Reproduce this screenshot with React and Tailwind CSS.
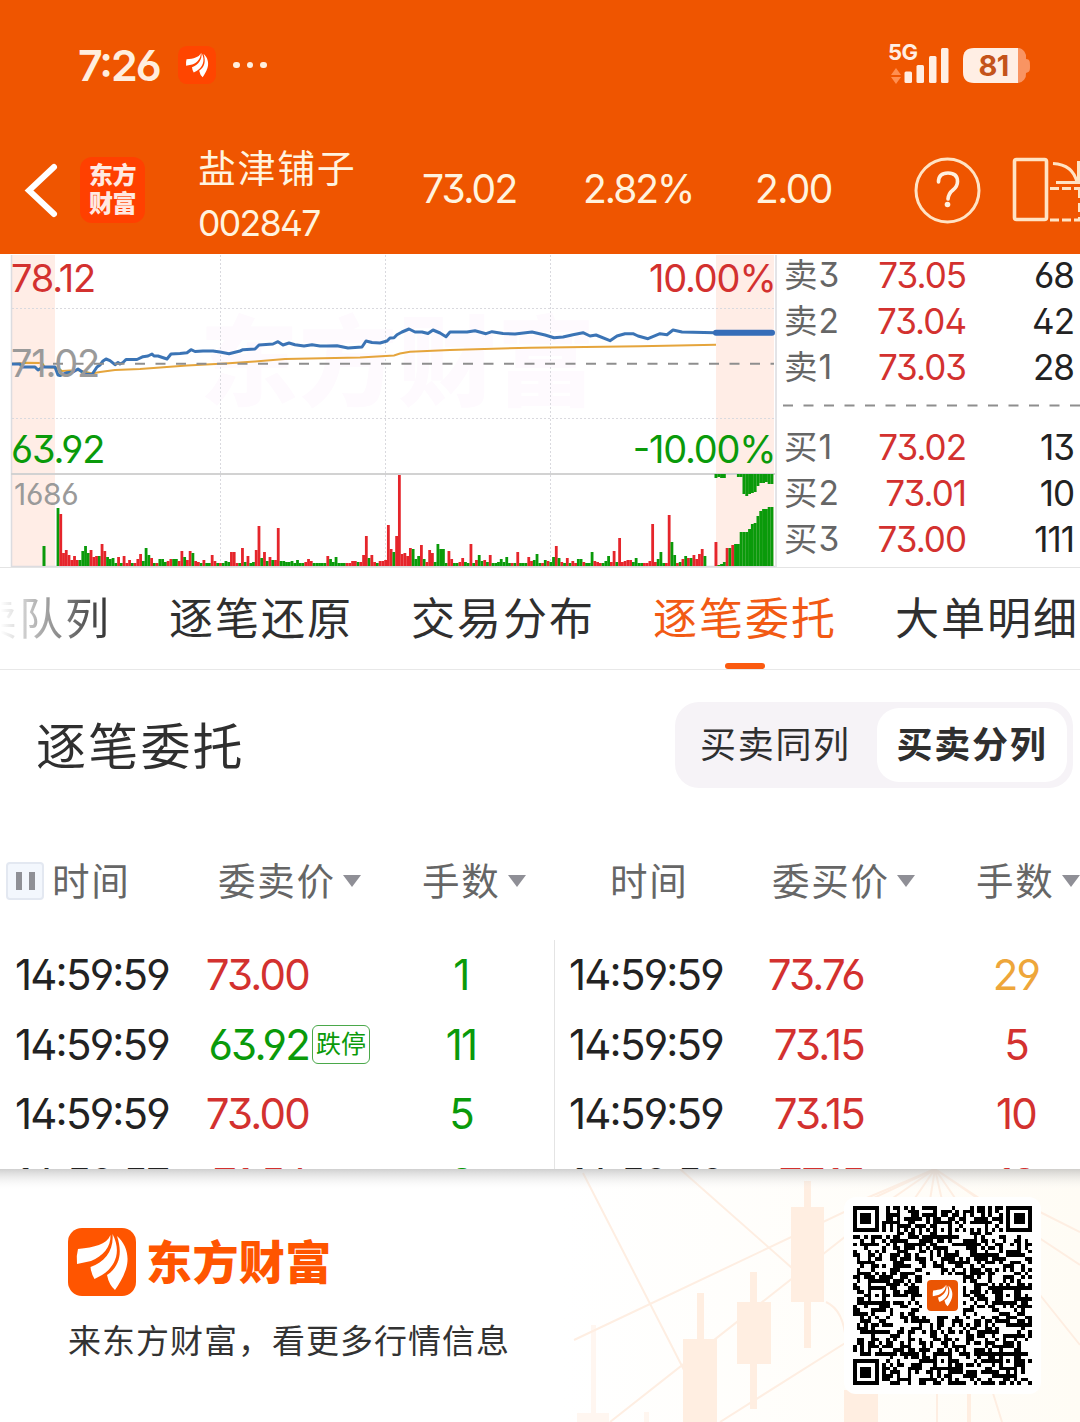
import { clsx } from "clsx";

const ASKS = [
  { label: "卖3", price: "73.05", qty: "68" },
  { label: "卖2", price: "73.04", qty: "42" },
  { label: "卖1", price: "73.03", qty: "28" },
];

const BIDS = [
  { label: "买1", price: "73.02", qty: "13" },
  { label: "买2", price: "73.01", qty: "10" },
  { label: "买3", price: "73.00", qty: "111" },
];

const TABS = ["卖队列", "逐笔还原", "交易分布", "逐笔委托", "大单明细"];

const SELL_ROWS = [
  { time: "14:59:59", price: "73.00", qty: "1" },
  { time: "14:59:59", price: "63.92", qty: "11", tag: "跌停" },
  { time: "14:59:59", price: "73.00", qty: "5" },
  { time: "14:59:57", price: "71.54", qty: "8" },
];

const BUY_ROWS = [
  { time: "14:59:59", price: "73.76", qty: "29", big: true },
  { time: "14:59:59", price: "73.15", qty: "5" },
  { time: "14:59:59", price: "73.15", qty: "10" },
  { time: "14:59:59", price: "77.15", qty: "18" },
];

const PRICE_LINE =
  "12,364 20,364 22,367 35,367 38,370 43,367 55,367 58,375 60,375.5 67,372.7 73,372 78,369 85,374 92,374.5 97,367 100,365 103,361 106,359 110,360.7 115,364.7 118,362.5 120,364 123,362.5 126,359.5 137,359.5 143,356.7 148,356 152,354 154,356 158,356 167,359 171,354 180,353.5 187,352.7 191,349.7 195,351.5 203,351 213,351 220,352 229,353.7 240,351 243,349.7 255,349 259,345 273,344 278,341.7 283,345 289,343 295,344.7 304,346 312,344.7 320,346 327,346 337,345.7 348,348 362,347 366,341 372,342.5 380,343 387,341 390,338 394,337.7 397,334.7 402,332 409,329 415,332 422,332 428,333.5 433,330 440,333 446,336.7 450,332 467,332 475,330.7 486,333.7 492,331.7 503,333.5 515,334 532,332 545,335 554,337.7 563,337 573,334.7 583,332.7 590,336 596,335 610,340.7 617,336 625,333.7 633,333.7 638,336 648,338.7 660,333.7 667,334.7 673,330 682,332 715,332.7";

const AVG_LINE =
  "12,364 26,362.7 42,363 45,367 58,368 62,371 78,370 92,373.5 100,372 115,370 140,369 187,365.5 225,363.5 255,361.5 285,359 360,357.5 394,355.5 400,353.5 410,351.7 450,350 530,347.7 640,346.3 716,344.7";

// one entry per minute: r = up, g = down, number = bar height
const VOLUME =
  "g58 r52 r13 r16 r11 r6 r10 r6 g6 g15 g20 g13 r16 r9 r10 g10 r22 r15 g9 g7 g8 g3 r9 g3 r10 r3 r6 g3 r3 r7 r12 g5 g18 g11 r8 g3 r3 g7 g7 g4 r5 r7 g7 g7 r5 r15 g9 r6 r15 g13 r5 r4 g3 r6 g3 g3 r11 r5 g3 r3 g3 g5 g4 r14 r14 r3 g3 r18 g4 r10 g3 g4 r16 r40 g8 r14 g5 r9 g6 r6 r38 g5 g5 g4 g4 g5 g3 g6 g3 g3 r4 r7 r5 g3 g3 g3 g3 g3 r10 g7 g4 g9 g3 g3 g3 r3 r3 r5 r5 g4 r4 r11 r30 g8 r11 r4 g3 r5 r5 r6 r41 r17 g14 r30 r91 r12 r13 r10 r18 g17 g7 g10 r21 g7 r4 r16 r13 g4 g22 g17 g17 g3 r15 r7 g3 g3 r4 r8 g4 g3 r22 g3 r6 g11 g5 r6 g4 r11 g3 g3 g4 g7 g4 g9 g3 r3 g3 r14 g3 g3 g3 r9 r5 g6 g12 g3 r3 g6 r5 g4 g9 r20 g8 r4 g3 r8 g3 r5 r3 g7 g7 r4 g3 g3 g14 r5 r4 r3 g3 g5 g10 r4 r15 g4 r28 r4 r5 r6 r6 g4 g8 g3 g3 r3 r3 r5 r42 r4 g7 g14 g3 r3 r51 g24 g11 r3 g4 r7 g10 r8 g8 r11 r7 r12 r17 g10".split(
    " ",
  );

const AUCTION = [
  24, 1, 2, 4, 18, 18, 21, 22, 22, 34, 34, 34, 37, 42, 43, 50, 55, 57, 57, 59, 59,
];
const UNMATCHED = [4, 3, 4, 4, 0, 0, 0, 0, 3, 3, 20, 22, 20, 19, 18, 12, 9, 9, 8, 10, 10];

const GREEN = "#0a9a0a";
const RED = "#e5252b";

function BrandMark({ className, bg, radius, scale = 1 }) {
  return (
    <svg viewBox="0 0 68 68" className={className}>
      <rect width="68" height="68" rx={radius} fill={bg} />
      <g fill="#fff" transform={`translate(34 34) scale(${scale}) translate(-34 -34)`}>
        <path d="M42.5 7C38 17 27 19 10 21Q8 28 9 36L23 33C35 28 43 19 42.5 7Z" />
        <path d="M44.5 6C46 22 37 34 22.5 39Q23 45 26.5 51L34 47C47 39 54 24 44.5 6Z" />
        <path d="M49 8C58 16 62 28 58 41C55 50 51 56 47 62Q41 57 39 47C51 39 55 26 49 8Z" />
      </g>
    </svg>
  );
}

function StatusBar() {
  return (
    <div className="flex h-[130px] items-center justify-between pl-[78px] pr-[50px] text-[#ffeede]">
      <div className="flex items-center">
        <span className="w-[100px] text-[43px] font-semibold leading-none tracking-[-2px]">7:26</span>
        <BrandMark className="size-[38px]" bg="#ff4500" radius={16} scale={0.78} />
        <div className="ml-[17px] flex gap-[7px]">
          <i className="size-[6.5px] rounded-full bg-[#ffeede]" />
          <i className="size-[6.5px] rounded-full bg-[#ffeede]" />
          <i className="size-[6.5px] rounded-full bg-[#ffeede]" />
        </div>
      </div>
      <svg width="150" height="64" viewBox="880 32 150 64" fill="#ffeee4">
        <text x="888" y="59" fontSize="22" fontWeight="700" letterSpacing="-0.6">
          5G
        </text>
        <path d="M896 67l5 7h-10zM896 83l5-7h-10z" fill="#ff8f50" />
        <rect x="904.5" y="70.5" width="7.5" height="11.5" rx="1.5" />
        <rect x="916.5" y="64" width="7.5" height="18" rx="1.5" />
        <rect x="929" y="55" width="7.5" height="27" rx="1.5" />
        <rect x="941" y="47" width="7.5" height="35" rx="1.5" />
        <path d="M1018 47a9 9 0 0 1 8 11c4 0 4 3 4 7s0 6-4 7a9 9 0 0 1-8 10z" fill="#f99462" />
        <path d="M974 47h44v35h-44q-11 0-11-11V58q0-11 11-11z" />
        <text x="993.5" y="75" fontSize="29" fontWeight="700" letterSpacing="-0.8" textAnchor="middle" fill="#c4531a">
          81
        </text>
      </svg>
    </div>
  );
}

function StockHeader() {
  return (
    <div className="flex h-[124px] items-center pb-[5px] text-[#fff3df]">
      <svg width="80" height="66" viewBox="0 156 80 66" fill="none" className="shrink-0">
        <path d="M54 166L29 189.500L54 213" stroke="#fff" strokeWidth="6" strokeLinecap="round" />
      </svg>
      <div className="flex h-[66px] w-[65px] shrink-0 flex-col items-center justify-center rounded-xl bg-[#ff4000] text-[24px] font-black leading-[28px] tracking-[-0.5px] text-[#ffe9e2]">
        <span>东方</span>
        <span>财富</span>
      </div>
      <div className="ml-[53px] mt-[10px] flex w-[224px] shrink-0 flex-col">
        <span className="text-[38px] leading-[58px] tracking-[1.6px]">盐津铺子</span>
        <span className="text-[35.500px] leading-[54px] tracking-[-1.600px]">002847</span>
      </div>
      <span className="w-[161px] shrink-0 text-[39px] tracking-[-1.800px]">73.02</span>
      <span className="w-[172px] shrink-0 text-[39px] tracking-[-2px]">2.82%</span>
      <span className="w-[159px] shrink-0 text-[39px] tracking-[-1.600px]">2.00</span>
      <svg width="166" height="72" viewBox="914 153 166 72" fill="none" stroke="#ffe3c4" strokeWidth="3" className="shrink-0">
        <circle cx="947.5" cy="189.500" r="31.500" />
        <path
          d="M938.500 181q0-9 9.500-9t9.500 8.500q0 5-4.500 8.500t-5 9"
          stroke="#fff0df"
          strokeWidth="3.600"
          strokeLinecap="round"
        />
        <circle cx="947.500" cy="203.500" r="2.800" fill="#fff0df" stroke="none" />
        <rect x="1014.500" y="158.500" width="32" height="60" rx="2" strokeWidth="3.600" />
        <path d="M1053 162.500q20 1 24 19M1056 181.500h24M1078.500 160v22" />
        <path d="M1050 187.500h30M1050 219h30" strokeDasharray="9 3" />
        <path d="M1079.500 188v30" strokeDasharray="9 5" />
      </svg>
    </div>
  );
}

function IntradayChart() {
  return (
    <svg width="780" height="313" viewBox="0 254 780 313" className="shrink-0">
      <rect x="12" y="255" width="43" height="311" fill="#ffede6" />
      <rect x="716" y="255" width="58" height="311" fill="#ffede6" />
      <text x="200" y="398" fontSize="98" fontWeight="900" letterSpacing="1" fill="#fefafe">
        东方财富
      </text>
      <g stroke="#d9d9de" strokeDasharray="2 2">
        <path d="M12 308.500H774M12 418.500H774M220.500 255V566M385.500 255V566M550.500 255V566" />
      </g>
      <path d="M11.500 255V566.500H775M776 255V567" fill="none" stroke="#dcdce0" strokeWidth="1.500" />
      <path d="M11 474H775" stroke="#d2d2d2" strokeWidth="2" />

      <polyline points={AVG_LINE} fill="none" stroke="#e5a53c" strokeWidth="2" />
      <polyline points={PRICE_LINE} fill="none" stroke="#3b74b5" strokeWidth="3" strokeLinejoin="round" />
      <path d="M716 332.700H772" stroke="#366db8" strokeWidth="6" strokeLinecap="round" />
      <path d="M53 363.700H774" stroke="#8e8e8e" strokeWidth="2" strokeDasharray="10 10.500" />

      <rect x="42.500" y="546" width="3" height="20" fill={GREEN} />
      {VOLUME.map((bar, i) => {
        const h = Number(bar.slice(1));
        return (
          <rect
            key={i}
            x={56.600 + i * 2.753}
            y={566 - h}
            width="2.800"
            height={h}
            fill={bar[0] === "r" ? RED : GREEN}
          />
        );
      })}
      {AUCTION.map((h, i) => (
        <rect
          key={i}
          x={714.500 + i * 2.800}
          y={566 - h}
          width="2.900"
          height={h}
          fill={i === 0 || i === 4 || i === 6 ? RED : GREEN}
        />
      ))}
      {UNMATCHED.map((h, i) => (
        <rect key={i} x={714.500 + i * 2.800} y="474" width="2.900" height={h} fill={GREEN} />
      ))}

      <g fontSize="38" letterSpacing="-1.2">
        <text x="11" y="292" fill="#d3312f">78.12</text>
        <text x="11" y="377" fill="#9a9a9a">71.02</text>
        <text x="11" y="463" fill={GREEN}>63.92</text>
        <text x="775.500" y="292" fill="#d3312f" textAnchor="end">10.00%</text>
        <text x="775.500" y="463" fill={GREEN} textAnchor="end">-10.00%</text>
      </g>
      <text x="14" y="505" fontSize="30" letterSpacing="-0.3" fill="#9a9a9a">
        1686
      </text>
    </svg>
  );
}

function QuoteRow({ label, price, qty }) {
  return (
    <div className="flex h-[46px] items-center text-[35px] tracking-[-1px]">
      <span className="w-[70px] text-[33.500px] tracking-[1px] text-[#666]">{label}</span>
      <span className="w-[112px] text-right text-[#d3312f]">{price}</span>
      <span className="w-[108px] text-right text-[#222]">{qty}</span>
    </div>
  );
}

function OrderBook() {
  return (
    <div className="flex w-[300px] flex-col pl-1">
      <div className="-mt-0.5">
        {ASKS.map((row) => (
          <QuoteRow key={row.label} {...row} />
        ))}
      </div>
      <svg width="297" height="34" className="-ml-px shrink-0">
        <path d="M0 15.500H297" stroke="#8e8e8e" strokeWidth="2" strokeDasharray="10 10.500" />
      </svg>
      {BIDS.map((row) => (
        <QuoteRow key={row.label} {...row} />
      ))}
    </div>
  );
}

function TabBar() {
  return (
    <div className="flex h-[102px] items-stretch justify-end gap-[58px] overflow-hidden border-b border-[#e8e8e8] pr-px">
      {TABS.map((tab, i) => {
        const active = tab === "逐笔委托";
        return (
          <div
            key={tab}
            className={clsx(
              "relative flex shrink-0 justify-center whitespace-nowrap pt-[18px] text-[44px] leading-[66px] tracking-[2px]",
              active ? "text-[#f25a14]" : "text-[#2f2f2f]",
              i === 0 && "bg-linear-to-r from-white from-20% to-[#2f2f2f] bg-clip-text text-transparent",
            )}
          >
            {tab}
            {active && <span className="absolute bottom-0 left-1/2 h-[6px] w-10 -translate-x-1/2 rounded-full bg-[#fb5a10]" />}
          </div>
        );
      })}
    </div>
  );
}

function SectionTitle() {
  return (
    <div className="flex h-[150px] items-center justify-between pl-9 pr-[7px]">
      <h2 className="pt-1 text-[50px] leading-none tracking-[2.200px] text-[#2f2f2f]">逐笔委托</h2>
      <div className="flex h-[86px] items-center rounded-[24px] bg-[#f6f3f7] p-[6px] text-[36px] tracking-[1.700px] text-[#2f2f2f]">
        <span className="w-[196px] pl-[19px]">买卖同列</span>
        <span className="flex h-[74px] w-[190px] items-center justify-center rounded-[22px] bg-white font-bold">
          买卖分列
        </span>
      </div>
    </div>
  );
}

function SortArrow() {
  return (
    <svg width="18" height="12" viewBox="0 0 18 12" className="ml-[7px] shrink-0" fill="#8f8f96">
      <path d="M0 0h18l-9 12z" />
    </svg>
  );
}

function TableHead({ priceLabel, pausable }) {
  return (
    <div className="flex h-[80px] w-[554px] shrink-0 items-center text-[37.500px] tracking-[1.800px] text-[#666]">
      <div className="flex w-[52px] pl-[6px]">
        {pausable && (
          <span className="flex size-[38px] items-center justify-center gap-[7px] rounded-sm border-2 border-[#e3e8f1] bg-[#f3f7fd]">
            <i className="h-[18px] w-[6px] bg-[#8f9096]" />
            <i className="h-[18px] w-[6px] bg-[#8f9096]" />
          </span>
        )}
      </div>
      <span className={clsx("shrink-0 pt-0.5", pausable ? "w-[166px]" : "w-[162px] pl-1")}>时间</span>
      <span className={clsx("flex w-[204px] shrink-0 items-center", !pausable && "ml-1")}>
        <span className="pt-0.5">{priceLabel}</span>
        <SortArrow />
      </span>
      <span className="flex items-center">
        <span className="pt-0.5">手数</span>
        <SortArrow />
      </span>
    </div>
  );
}

function OrderRow({ time, price, qty, tag, big, side }) {
  return (
    <div className="flex h-[69.500px] w-[554px] items-center text-[42px] tracking-[-1.800px]">
      <span className={clsx("w-[160px]", side === "sell" ? "pl-[15px]" : "pl-[14px]")}>{time}</span>
      <span className={clsx("w-[149px] text-right", tag ? "text-[#0a9a0a]" : "text-[#d3312f]")}>{price}</span>
      <span className="w-[63px] pl-[3px]">
        {tag && (
          <span className="flex h-[39px] w-[58px] items-center justify-center rounded-md border-[1.500px] border-[#4aa84a] text-[25px] tracking-normal text-[#0a9a0a]">
            {tag}
          </span>
        )}
      </span>
      <span
        className={clsx(
          "w-[178px] text-center",
          side === "sell" ? "text-[#0a9a0a]" : big ? "text-[#eea63a]" : "text-[#d3312f]",
        )}
      >
        {qty}
      </span>
    </div>
  );
}

function OrderTable() {
  return (
    <div className="h-[349px] overflow-hidden pt-[21px] text-[#222]">
      <div className="flex">
        <TableHead priceLabel="委卖价" pausable />
        <TableHead priceLabel="委买价" />
      </div>
      <div className="mt-[19px] flex">
        <div className="w-[554px] shrink-0">
          {SELL_ROWS.map((row, i) => (
            <OrderRow key={i} {...row} side="sell" />
          ))}
        </div>
        <div className="shrink-0 border-l border-[#e4e4e4]">
          {BUY_ROWS.map((row, i) => (
            <OrderRow key={i} {...row} side="buy" />
          ))}
        </div>
      </div>
    </div>
  );
}

const QR_SIZE = 49;

function ring(dx, dy) {
  return Math.max(Math.abs(dx), Math.abs(dy));
}

function qrModules() {
  const path = [];
  let seed = 20847;
  for (let y = 0; y < QR_SIZE; y++) {
    for (let x = 0; x < QR_SIZE; x++) {
      seed ^= seed << 13;
      seed ^= seed >>> 17;
      seed ^= seed << 5;
      let on = (seed >>> 0) % 100 < 51;
      if (x === 6 || y === 6) on = (x + y) % 2 === 0;
      for (const [cx, cy] of [[24, 6], [42, 24], [6, 24], [24, 42], [42, 42]]) {
        const d = ring(x - cx, y - cy);
        if (d <= 2) on = d !== 1;
      }
      for (const [cx, cy] of [[3, 3], [45, 3], [3, 45]]) {
        const d = ring(x - cx, y - cy);
        if (d <= 4) on = d !== 2 && d !== 4;
      }
      if (ring(x - 24, y - 24) <= 5) on = false;
      if (on) path.push(`M${x} ${y}h1v1h-1z`);
    }
  }
  return path.join("");
}

const QR_PATH = qrModules();

function QrCode() {
  return (
    <div className="flex size-[197px] items-center justify-center rounded-xl bg-white">
      <div className="relative size-[179px]">
        <svg viewBox="0 0 49 49" className="size-full" shapeRendering="crispEdges">
          <path d={QR_PATH} />
        </svg>
        <BrandMark className="absolute left-[74px] top-[74px] size-[31px]" bg="#ea5504" radius={9} scale={0.85} />
      </div>
    </div>
  );
}

function FooterBackdrop() {
  return (
    <svg className="absolute inset-0 size-full" viewBox="0 1169 1080 253">
      <defs>
        <linearGradient id="warm" x1="0" x2="1">
          <stop offset="0" stopColor="#fff" />
          <stop offset="1" stopColor="#fffcf5" />
        </linearGradient>
        <linearGradient id="shade" x1="0" x2="0" y1="0" y2="1">
          <stop offset="0" stopColor="#a8a8a8" stopOpacity="0.55" />
          <stop offset="1" stopColor="#fff" stopOpacity="0" />
        </linearGradient>
      </defs>
      <rect x="560" y="1169" width="520" height="253" fill="url(#warm)" />
      <g fill="none" stroke="#feeee2" strokeWidth="2">
        <path d="M583 1173L684 1370M680 1169L792 1268M574 1340L935 1169M610 1422L860 1225M720 1422L850 1340M1040 1212L1080 1232M1040 1295L1080 1345M826 1302q18 8 20 40" />
        <path d="M935 1169L862 1200M935 1169L890 1200M935 1169L915 1198M935 1169L930 1200M935 1169L942 1200M935 1169L955 1198M935 1169L980 1200M935 1169L1080 1265M937 1390V1422M992 1390L1002 1422" />
      </g>
      <g fill="#ffeee1">
        <path d="M804 1181h7v26h13v95h-13v46h-7v-46h-13v-95h13z" />
        <path d="M750 1272h7v30h14v62h-14v45h-7v-45h-13v-62h13z" />
        <path d="M697 1293h7v46h13v83h-34v-83h14z" />
        <path d="M844 1390h34v32h-34zM967 1390h4v32h-4z" />
        <path d="M591 1325h5v88h13v9h-32v-9h14zM644 1412h5v10h-5z" opacity="0.500" />
      </g>
      <rect y="1169" width="1080" height="22" fill="url(#shade)" />
    </svg>
  );
}

function Footer() {
  return (
    <footer className="relative h-[253px] overflow-hidden bg-white">
      <FooterBackdrop />
      <div className="relative flex justify-between pl-[68px] pr-[39px] pt-7">
        <div className="pt-[31px]">
          <div className="flex items-center">
            <BrandMark className="size-[68px]" bg="#ff5500" radius={14} />
            <span className="ml-[10px] text-[46px] font-black leading-[68px] tracking-[0.400px] text-[#ff5500]">东方财富</span>
          </div>
          <p className="mt-5 text-[33px] leading-[50px] tracking-[1px] text-[#333]">来东方财富，看更多行情信息</p>
        </div>
        <QrCode />
      </div>
    </footer>
  );
}

export default function App() {
  return (
    <div className="h-[1422px] w-[1080px] overflow-hidden bg-white font-['Inter','Noto_Sans_CJK_SC',sans-serif] [font-feature-settings:'ss01','calt']">
      <header className="bg-[#ef5500]">
        <StatusBar />
        <StockHeader />
      </header>
      <section className="flex h-[314px] overflow-hidden border-b border-[#e4e4e4]">
        <IntradayChart />
        <OrderBook />
      </section>
      <TabBar />
      <SectionTitle />
      <OrderTable />
      <Footer />
    </div>
  );
}
